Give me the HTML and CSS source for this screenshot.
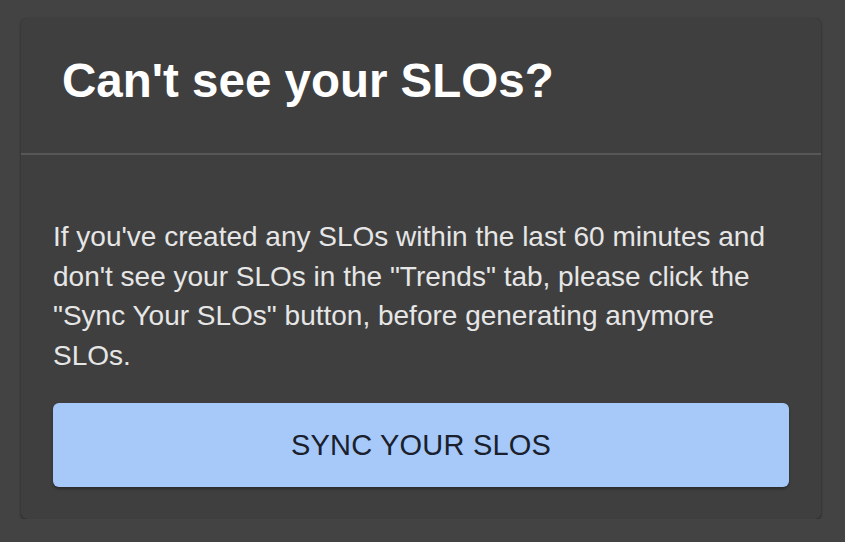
FILE: index.html
```html
<!DOCTYPE html>
<html>
<head>
<meta charset="utf-8">
<link rel="stylesheet" href="styles.css">
</head>
<body>
<div class="card">
  <div class="card-header">
    <h2 class="title">Can't see your SLOs?</h2>
  </div>
  <div class="card-body">
    <p class="message">If you've created any SLOs within the last 60 minutes and don't see your SLOs in the "Trends" tab, please click the "Sync Your SLOs" button, before generating anymore SLOs.</p>
    <button class="sync-btn">SYNC YOUR SLOS</button>
  </div>
</div>
</body>
</html>
```

FILE: styles.css
```css
html, body {
  margin: 0;
  padding: 0;
}
body {
  background: #434343;
  font-family: "Liberation Sans", Arial, sans-serif;
  padding: 18px 24px 0 21px;
}
.card {
  width: 800px;
  background: #3f3f3f;
  border-radius: 6px;
  box-shadow: 0 2px 3px rgba(0,0,0,0.35), 0 0 1px rgba(0,0,0,0.3);
}
.card-header {
  height: 137px;
  display: flex;
  align-items: center;
  padding-left: 41px;
  padding-bottom: 9px;
  border-bottom: 2px solid #575757;
  box-sizing: border-box;
}
.title {
  margin: 0;
  color: #ffffff;
  font-size: 47.5px;
  font-weight: bold;
  line-height: 1;
}
.card-body {
  padding: 62px 32px 32px 32px;
}
.message {
  margin: 0 0 28px 0;
  color: #e6e6e6;
  font-size: 28px;
  line-height: 39.5px;
}
.sync-btn {
  display: block;
  width: 100%;
  height: 84px;
  border: none;
  border-radius: 6px;
  background: #a6c9fa;
  color: #1a202c;
  font-family: "Liberation Sans", Arial, sans-serif;
  font-size: 29px;
  letter-spacing: 0.2px;
  box-shadow: 0 2px 3px rgba(0,0,0,0.35);
}
```
